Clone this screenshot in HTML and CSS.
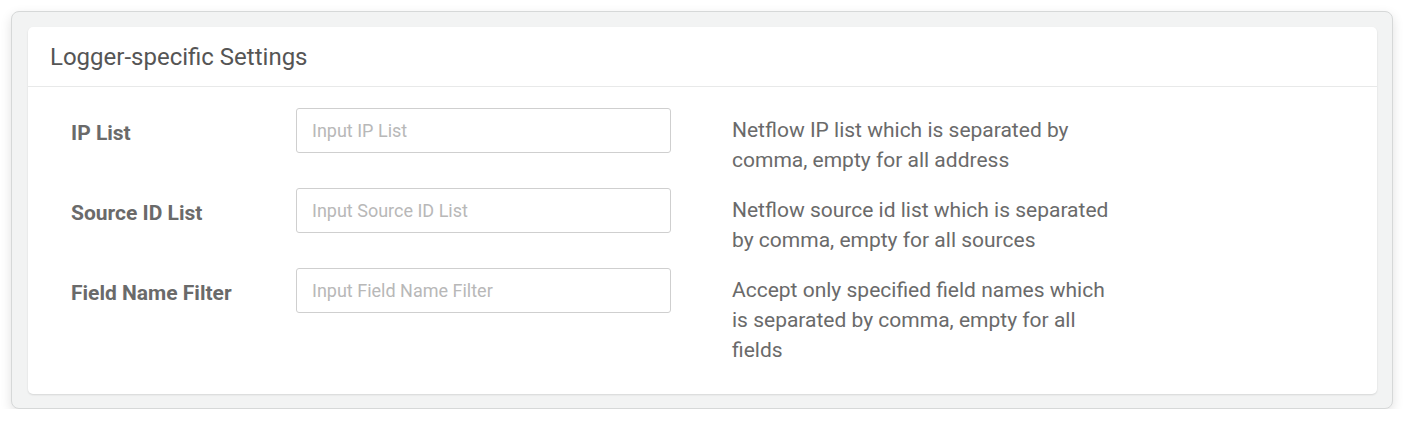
FILE: index.html
```html
<!DOCTYPE html>
<html>
<head>
<meta charset="utf-8">
<link rel="stylesheet" href="styles.css">
</head>
<body>
<div class="frame">
  <div class="card">
    <div class="card-header">Logger-specific Settings</div>
    <div class="card-body">
      <div class="row">
        <label class="label">IP List</label>
        <input class="input" type="text" placeholder="Input IP List">
        <div class="desc">Netflow IP list which is separated by comma, empty for all address</div>
      </div>
      <div class="row">
        <label class="label">Source ID List</label>
        <input class="input" type="text" placeholder="Input Source ID List">
        <div class="desc">Netflow source id list which is separated by comma, empty for all sources</div>
      </div>
      <div class="row">
        <label class="label">Field Name Filter</label>
        <input class="input" type="text" placeholder="Input Field Name Filter">
        <div class="desc">Accept only specified field names which is separated by comma, empty for all fields</div>
      </div>
    </div>
  </div>
</div>
</body>
</html>
```
FILE: styles.css
```css
html, body {
  margin: 0;
  padding: 0;
  background: #ffffff;
}
body {
  padding: 11px 0 0 11px;
  font-family: Roboto, "Liberation Sans", sans-serif;
}
.frame {
  width: 1349px;
  background: #f2f3f3;
  border: 1px solid #d6d8d8;
  border-radius: 8px;
  padding: 15px 15px 14px 16px;
  box-shadow: 0 4px 12px rgba(0, 0, 0, 0.12);
}
.card {
  background: #ffffff;
  border-radius: 5px;
  box-shadow: 0 1px 2px rgba(0, 0, 0, 0.12);
}
.card-header {
  height: 60px;
  box-sizing: border-box;
  padding: 0 22px;
  display: flex;
  align-items: center;
  font-size: 24px;
  color: #555555;
  border-bottom: 1px solid #e8e9e9;
}
.card-body {
  padding: 21px 0 29px 43px;
}
.row {
  display: flex;
  align-items: flex-start;
  margin-bottom: 13px;
}
.row:last-child {
  margin-bottom: 0;
}
.label {
  width: 225px;
  font-size: 21px;
  font-weight: bold;
  color: #6a6a6a;
  line-height: 30px;
  padding-top: 10px;
}
.input {
  width: 375px;
  height: 45px;
  box-sizing: border-box;
  border: 1px solid #cfcfcf;
  border-radius: 3px;
  padding: 0 15px;
  font-family: Roboto, "Liberation Sans", sans-serif;
  font-size: 18px;
  color: #555;
  outline: none;
  margin: 0;
}
.input::placeholder {
  color: #b8b8b8;
}
.desc {
  width: 385px;
  margin-left: 61px;
  margin-top: 7px;
  font-size: 21px;
  line-height: 30px;
  color: #6a6a6a;
}
```
